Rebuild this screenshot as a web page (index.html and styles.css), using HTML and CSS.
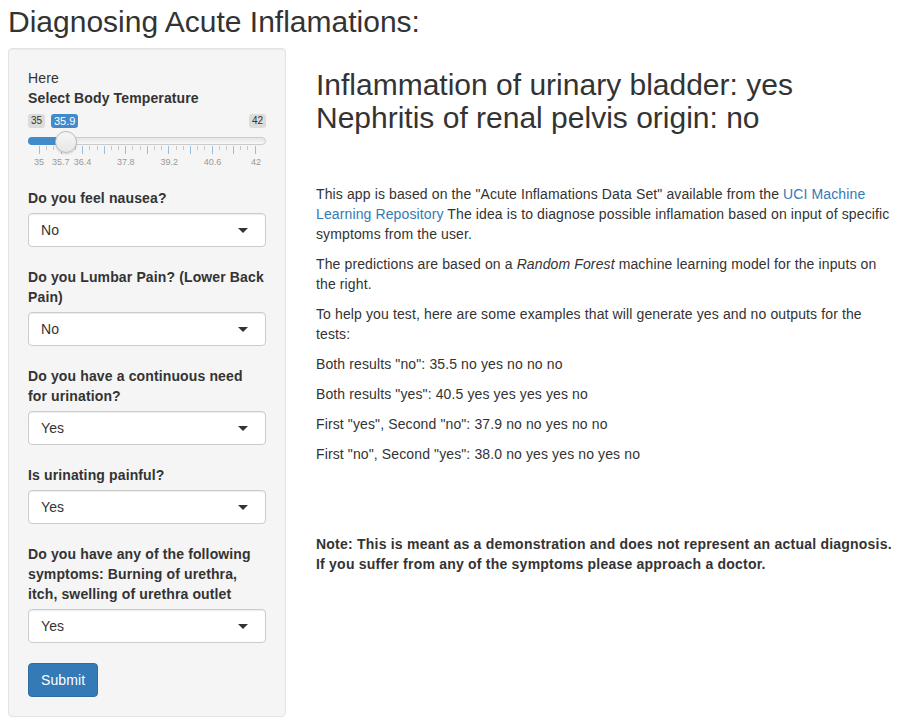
FILE: index.html
```html
<!DOCTYPE html>
<html lang="en">
<head>
<meta charset="utf-8">
<title>Diagnosing Acute Inflamations</title>
<link rel="stylesheet" href="styles.css">
</head>
<body>
<h2 class="page-title">Diagnosing Acute Inflamations:</h2>
<div class="row">
  <aside class="well">
    <div class="here">Here</div>
    <div class="form-group">
      <label class="control-label">Select Body Temperature</label>
      <div class="irs">
        <span class="irs-line"></span>
        <span class="irs-bar"></span>
        <span class="irs-min">35</span>
        <span class="irs-max">42</span>
        <span class="irs-single">35.9</span>
        <span class="irs-slider"></span>
        <div class="irs-grid">
          <span class="pol big"></span><span class="pol"></span><span class="pol"></span>
          <span class="pol big"></span><span class="pol"></span><span class="pol"></span>
          <span class="pol big"></span><span class="pol"></span><span class="pol"></span>
          <span class="pol big"></span><span class="pol"></span><span class="pol"></span>
          <span class="pol big"></span><span class="pol"></span><span class="pol"></span>
          <span class="pol big"></span><span class="pol"></span><span class="pol"></span>
          <span class="pol big"></span><span class="pol"></span><span class="pol"></span>
          <span class="pol big"></span><span class="pol"></span><span class="pol"></span>
          <span class="pol big"></span><span class="pol"></span><span class="pol"></span>
          <span class="pol big"></span><span class="pol"></span><span class="pol"></span>
          <span class="pol big"></span>
          <span class="grid-text" style="left:0%">35</span>
          <span class="grid-text" style="left:10%">35.7</span>
          <span class="grid-text" style="left:20%">36.4</span>
          <span class="grid-text" style="left:40%">37.8</span>
          <span class="grid-text" style="left:60%">39.2</span>
          <span class="grid-text" style="left:80%">40.6</span>
          <span class="grid-text" style="left:100%">42</span>
        </div>
      </div>
    </div>
    <div class="form-group">
      <label class="control-label">Do you feel nausea?</label>
      <div class="select-input"><span>No</span><span class="caret"></span></div>
    </div>
    <div class="form-group">
      <label class="control-label">Do you Lumbar Pain? (Lower Back Pain)</label>
      <div class="select-input"><span>No</span><span class="caret"></span></div>
    </div>
    <div class="form-group">
      <label class="control-label">Do you have a continuous need<br>for urination?</label>
      <div class="select-input"><span>Yes</span><span class="caret"></span></div>
    </div>
    <div class="form-group">
      <label class="control-label">Is urinating painful?</label>
      <div class="select-input"><span>Yes</span><span class="caret"></span></div>
    </div>
    <div class="form-group">
      <label class="control-label">Do you have any of the following symptoms: Burning of urethra,<br>itch, swelling of urethra outlet</label>
      <div class="select-input"><span>Yes</span><span class="caret"></span></div>
    </div>
    <button class="btn-primary" type="button">Submit</button>
  </aside>
  <main class="main-panel">
    <h3 class="results">
      <div>Inflammation of urinary bladder: yes</div>
      <div>Nephritis of renal pelvis origin: no</div>
    </h3>
    <p>This app is based on the "Acute Inflamations Data Set" available from the <a href="#">UCI Machine Learning Repository</a> The idea is to diagnose possible inflamation based on input of specific symptoms from the user.</p>
    <p>The predictions are based on a <em>Random Forest</em> machine learning model for the inputs on the right.</p>
    <p>To help you test, here are some examples that will generate yes and no outputs for the tests:</p>
    <p>Both results "no": 35.5 no yes no no no</p>
    <p>Both results "yes": 40.5 yes yes yes yes no</p>
    <p>First "yes", Second "no": 37.9 no no yes no no</p>
    <p>First "no", Second "yes": 38.0 no yes yes no yes no</p>
    <p class="note"><strong>Note: This is meant as a demonstration and does not represent an actual diagnosis.<br>If you suffer from any of the symptoms please approach a doctor.</strong></p>
  </main>
</div>
</body>
</html>
```
FILE: styles.css
```css
* { box-sizing: border-box; }
html, body {
  margin: 0;
  padding: 0;
  background: #fff;
}
body {
  font-family: "Liberation Sans", Arial, Helvetica, sans-serif;
  font-size: 14px;
  line-height: 20px;
  color: #333;
  padding: 0 8px;
  letter-spacing: 0.12px;
}
.page-title {
  font-size: 30px;
  font-weight: normal;
  line-height: 33px;
  margin: 5px 0 10px;
  letter-spacing: 0;
}
.row {
  display: flex;
  gap: 30px;
  align-items: flex-start;
}
.well {
  width: 278px;
  flex: none;
  background: #f5f5f5;
  border: 1px solid #e3e3e3;
  border-radius: 4px;
  box-shadow: inset 0 1px 1px rgba(0,0,0,.05);
  padding: 19px;
}
.form-group {
  margin-bottom: 20px;
}
.control-label {
  display: block;
  font-weight: bold;
  margin-bottom: 5px;
  letter-spacing: 0.13px;
}
/* slider */
.irs {
  position: relative;
  height: 55px;
  letter-spacing: 0;
}
.irs-line {
  position: absolute;
  left: 0;
  right: 0;
  top: 24px;
  height: 8px;
  border: 1px solid #ccc;
  border-radius: 16px;
  background: linear-gradient(to bottom, #ddd -50%, #fff 150%);
}
.irs-bar {
  position: absolute;
  left: 0;
  top: 24px;
  width: 38px;
  height: 8px;
  background: #428bca;
  border-radius: 16px 0 0 16px;
}
.irs-min, .irs-max {
  position: absolute;
  top: 1px;
  font-size: 10px;
  line-height: 12px;
  padding: 1px 3px;
  color: #333;
  background: rgba(0,0,0,0.1);
  border-radius: 3px;
}
.irs-min { left: 0; }
.irs-max { right: 0; }
.irs-single {
  position: absolute;
  top: 1px;
  left: 23px;
  font-size: 11px;
  line-height: 12px;
  padding: 1px 3px;
  color: #fff;
  background: #428bca;
  border-radius: 3px;
}
.irs-slider {
  position: absolute;
  left: 27px;
  top: 18px;
  width: 22px;
  height: 22px;
  border-radius: 50%;
  border: 1px solid #bbb;
  background: linear-gradient(to bottom, #fff -50%, #dedede 150%);
  box-shadow: 0 1px 2px rgba(0,0,0,.15);
  z-index: 2;
}
.irs-grid {
  position: absolute;
  left: 11px;
  width: 217px;
  top: 33px;
  height: 22px;
  display: flex;
  justify-content: space-between;
  align-items: flex-start;
}
.pol {
  width: 1px;
  height: 4px;
  background: #999;
  opacity: .5;
}
.pol.big {
  height: 8px;
  background: #428bca;
}
.grid-text {
  position: absolute;
  top: 11px;
  transform: translateX(-50%);
  font-size: 9px;
  line-height: 10px;
  color: #999;
  white-space: nowrap;
}
/* selects */
.select-input {
  display: flex;
  justify-content: space-between;
  align-items: center;
  height: 34px;
  padding: 6px 12px;
  background: #fff;
  border: 1px solid #ccc;
  border-radius: 4px;
  box-shadow: inset 0 1px 1px rgba(0,0,0,.075);
}
.caret {
  width: 0;
  height: 0;
  border-style: solid;
  border-width: 5px 5px 0 5px;
  border-color: #333 transparent transparent transparent;
  margin-right: 5px;
  margin-top: 1px;
}
.btn-primary {
  font-family: inherit;
  font-size: 14px;
  line-height: 20px;
  letter-spacing: 0.12px;
  padding: 6px 12px;
  color: #fff;
  background: #337ab7;
  border: 1px solid #2e6da4;
  border-radius: 4px;
  cursor: pointer;
}
/* main */
.main-panel {
  flex: 1;
  min-width: 0;
}
.results {
  font-size: 30px;
  font-weight: normal;
  line-height: 33px;
  margin: 20px 0 50px;
  letter-spacing: 0;
}
p {
  margin: 0 0 10px;
}
a {
  color: #337ab7;
  text-decoration: none;
}
.note {
  margin-top: 70px;
  letter-spacing: 0.22px;
}
```
